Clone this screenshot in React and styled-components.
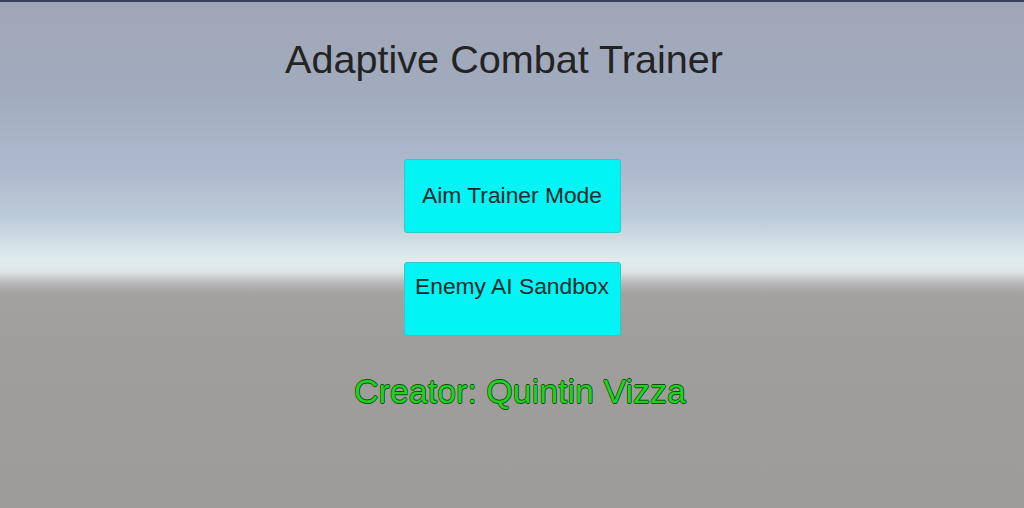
import React from "react";
import styled, { createGlobalStyle } from "styled-components";

const GlobalStyle = createGlobalStyle`
  html, body {
    margin: 0;
    padding: 0;
  }

  body {
    font-family: "Liberation Sans", Arial, sans-serif;
  }
`;

// skybox look: blue-gray sky, pale horizon band, flat gray ground
const Screen = styled.div`
  box-sizing: border-box;
  width: 1024px;
  height: 508px;
  overflow: hidden;
  border-top: 2px solid #39445c;
  background: linear-gradient(
    to bottom,
    #9fa6b7 0px,
    #a2abbe 90px,
    #adbacd 170px,
    #bccbd9 215px,
    #d2e0e6 242px,
    #e2ecee 258px,
    #dde4e5 270px,
    #b8b8b8 281px,
    #a4a2a1 291px,
    #a09e9d 340px,
    #9d9c9b 508px
  );
  display: flex;
  flex-direction: column;
  align-items: center;
`;

const Title = styled.h1`
  margin: 38px 16px 0 0;
  font-size: 39.6px;
  line-height: 1;
  font-weight: 400;
  color: #232323;
`;

const Menu = styled.div`
  margin-top: 79px;
  display: flex;
  flex-direction: column;
  gap: 29px;
`;

const MenuButton = styled.button`
  box-sizing: border-box;
  width: 217px;
  height: 74px;
  border: 1px solid #2fc9cc;
  border-radius: 3px;
  background: #02f4f4;
  color: #172a2c;
  font-family: "Liberation Sans", Arial, sans-serif;
  font-size: 22.8px;
  line-height: 1.2;
  padding: ${(props) => (props.$top ? "10px 2px 0" : "0 2px")};
  display: flex;
  justify-content: center;
  align-items: ${(props) => (props.$top ? "flex-start" : "center")};
  cursor: pointer;
`;

const Credit = styled.p`
  margin: 35px 0 0 16px;
  font-size: 34px;
  line-height: 1.2;
  color: #22d022;
  text-shadow:
    0.7px 0 0 #0d4f0d,
    -0.7px 0 0 #0d4f0d,
    0 0.7px 0 #0d4f0d,
    0 -0.7px 0 #0d4f0d;
`;

const App = () => {
  return (
    <>
      <GlobalStyle />
      <Screen>
        <Title>Adaptive Combat Trainer</Title>

        <Menu>
          <MenuButton>Aim Trainer Mode</MenuButton>
          <MenuButton $top>Enemy AI Sandbox</MenuButton>
        </Menu>

        <Credit>Creator: Quintin Vizza</Credit>
      </Screen>
    </>
  );
};

export default App;
